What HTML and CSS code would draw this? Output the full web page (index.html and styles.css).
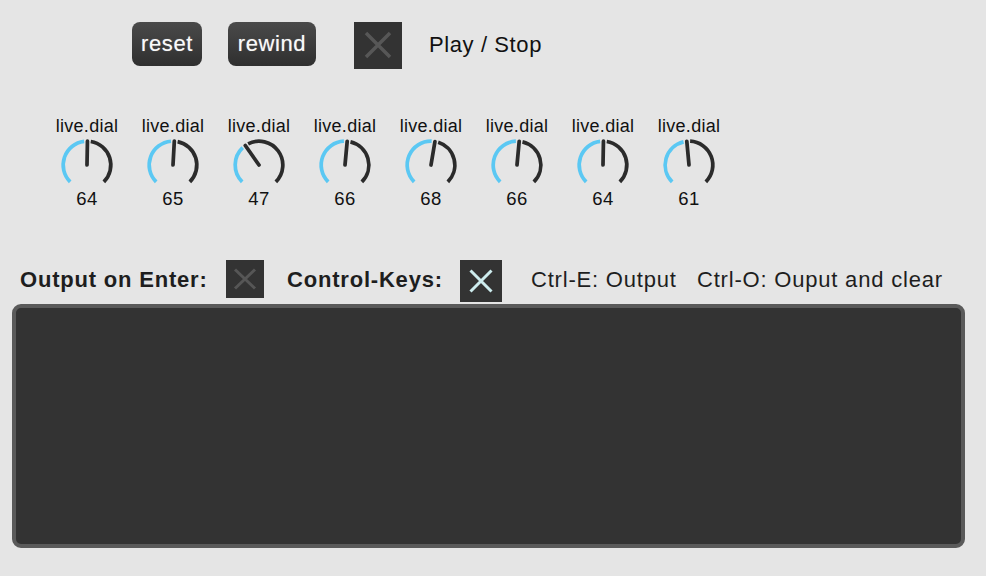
FILE: index.html
```html
<!DOCTYPE html>
<html>
<head>
<meta charset="utf-8">
<link rel="stylesheet" href="styles.css">
</head>
<body>
<div class="patch">
  <div class="top">
    <div class="btn btn-reset">reset</div>
    <div class="btn btn-rewind">rewind</div>
    <div class="toggle toggle-play">
      <svg width="48" height="47" viewBox="0 0 48 47"><path d="M12 11 L36 35 M36 11 L12 35" stroke="#575757" stroke-width="3.5" fill="none"/></svg>
    </div>
    <div class="play-label">Play / Stop</div>
  </div>

  <div class="dials">
    <div class="dial"><div class="dial-label">live.dial</div>
      <svg class="knob" viewBox="0 0 56 56"><path class="arc-on" d="M11.74 44.26 A23 23 0 0 1 25.22 5.17"/><path class="arc-off" d="M31.62 5.29 A23 23 0 0 1 44.26 44.26"/><path class="needle" d="M28 28 L28.43 5"/></svg>
      <div class="dial-value">64</div></div>
    <div class="dial"><div class="dial-label">live.dial</div>
      <svg class="knob" viewBox="0 0 56 56"><path class="arc-on" d="M11.74 44.26 A23 23 0 0 1 26.07 5.08"/><path class="arc-off" d="M32.46 5.44 A23 23 0 0 1 44.26 44.26"/><path class="needle" d="M28 28 L29.28 5.04"/></svg>
      <div class="dial-value">65</div></div>
    <div class="dial"><div class="dial-label">live.dial</div>
      <svg class="knob" viewBox="0 0 56 56"><path class="arc-on" d="M11.74 44.26 A23 23 0 0 1 12.28 11.21"/><path class="arc-off" d="M17.53 7.52 A23 23 0 0 1 44.26 44.26"/><path class="needle" d="M28 28 L14.78 9.18"/></svg>
      <div class="dial-value">47</div></div>
    <div class="dial"><div class="dial-label">live.dial</div>
      <svg class="knob" viewBox="0 0 56 56"><path class="arc-on" d="M11.74 44.26 A23 23 0 0 1 26.92 5.03"/><path class="arc-off" d="M33.29 5.62 A23 23 0 0 1 44.26 44.26"/><path class="needle" d="M28 28 L30.13 5.1"/></svg>
      <div class="dial-value">66</div></div>
    <div class="dial"><div class="dial-label">live.dial</div>
      <svg class="knob" viewBox="0 0 56 56"><path class="arc-on" d="M11.74 44.26 A23 23 0 0 1 28.63 5.01"/><path class="arc-off" d="M34.94 6.07 A23 23 0 0 1 44.26 44.26"/><path class="needle" d="M28 28 L31.82 5.32"/></svg>
      <div class="dial-value">68</div></div>
    <div class="dial"><div class="dial-label">live.dial</div>
      <svg class="knob" viewBox="0 0 56 56"><path class="arc-on" d="M11.74 44.26 A23 23 0 0 1 26.92 5.03"/><path class="arc-off" d="M33.29 5.62 A23 23 0 0 1 44.26 44.26"/><path class="needle" d="M28 28 L30.13 5.1"/></svg>
      <div class="dial-value">66</div></div>
    <div class="dial"><div class="dial-label">live.dial</div>
      <svg class="knob" viewBox="0 0 56 56"><path class="arc-on" d="M11.74 44.26 A23 23 0 0 1 25.22 5.17"/><path class="arc-off" d="M31.62 5.29 A23 23 0 0 1 44.26 44.26"/><path class="needle" d="M28 28 L28.43 5"/></svg>
      <div class="dial-value">64</div></div>
    <div class="dial"><div class="dial-label">live.dial</div>
      <svg class="knob" viewBox="0 0 56 56"><path class="arc-on" d="M11.74 44.26 A23 23 0 0 1 22.71 5.62"/><path class="arc-off" d="M29.08 5.03 A23 23 0 0 1 44.26 44.26"/><path class="needle" d="M28 28 L25.87 5.1"/></svg>
      <div class="dial-value">61</div></div>
  </div>

  <div class="controls">
    <div class="bold-label label-output">Output on Enter:</div>
    <div class="toggle toggle-output">
      <svg width="38" height="38" viewBox="0 0 38 38"><path d="M9 9.5 L29 28.5 M29 9.5 L9 28.5" stroke="#565656" stroke-width="3" fill="none"/></svg>
    </div>
    <div class="bold-label label-keys">Control-Keys:</div>
    <div class="toggle toggle-keys">
      <svg width="42" height="42" viewBox="0 0 42 42"><path d="M10.5 10.5 L31.5 31.5 M31.5 10.5 L10.5 31.5" stroke="#cdecee" stroke-width="3" fill="none"/></svg>
    </div>
    <div class="hint hint-e">Ctrl-E: Output</div>
    <div class="hint hint-o">Ctrl-O: Ouput and clear</div>
  </div>

  <div class="console"></div>
</div>
</body>
</html>
```

FILE: styles.css
```css
html, body {
  margin: 0;
  padding: 0;
  background: #e5e5e5;
}
body {
  width: 986px;
  height: 576px;
  overflow: hidden;
  font-family: "Liberation Sans", Arial, sans-serif;
  color: #1c1c1c;
}
.patch {
  display: flex;
  flex-direction: column;
}

/* top row */
.top {
  display: flex;
  align-items: flex-start;
  box-sizing: border-box;
  height: 69px;
  padding: 22px 0 0 132px;
}
.btn {
  height: 44px;
  line-height: 44px;
  box-sizing: border-box;
  border-radius: 8px;
  background: linear-gradient(#4a4a4a, #2f2f2f);
  color: #fafafa;
  font-size: 22px;
  letter-spacing: 0.6px;
  text-align: center;
  text-shadow: 0 0 1px rgba(255,255,255,0.5);
}
.btn-reset { width: 70px; }
.btn-rewind { width: 88px; margin-left: 26px; }
.toggle {
  background: #333333;
  display: flex;
}
.toggle-play {
  width: 48px;
  height: 47px;
  margin-left: 38px;
}
.play-label {
  margin-left: 27px;
  font-size: 22px;
  letter-spacing: 0.6px;
  line-height: 47px;
  margin-top: -1px;
  color: #111;
}

/* dials */
.dials {
  display: flex;
  box-sizing: border-box;
  height: 191px;
  padding: 47px 0 0 44px;
}
.dial {
  width: 86px;
  display: flex;
  flex-direction: column;
  align-items: center;
}
.dial-label {
  font-size: 18px;
  letter-spacing: 0.3px;
  line-height: 20px;
  height: 20px;
  color: #111;
}
.knob {
  display: block;
  width: 58px;
  height: 58px;
}
.arc-on, .arc-off {
  fill: none;
  stroke-width: 3.6;
}
.arc-on { stroke: #5bc8f3; }
.arc-off { stroke: #2b2b2b; }
.needle {
  stroke: #2b2b2b;
  stroke-width: 3.6;
  stroke-linecap: round;
  fill: none;
}
.dial-value {
  font-size: 18.5px;
  letter-spacing: 0.4px;
  line-height: 20px;
  margin-top: -5px;
  color: #111;
}

/* controls row */
.controls {
  display: flex;
  align-items: flex-start;
  box-sizing: border-box;
  height: 44px;
  padding-left: 20px;
}
.bold-label {
  font-weight: bold;
  font-size: 22px;
  letter-spacing: 0.8px;
  line-height: 40px;
  color: #1e1e1e;
}
.label-output { width: 206px; }
.toggle-output {
  width: 38px;
  height: 38px;
}
.label-keys {
  width: 173px;
  margin-left: 23px;
}
.toggle-keys {
  width: 42px;
  height: 42px;
}
.hint {
  font-size: 22px;
  letter-spacing: 0.8px;
  line-height: 40px;
  color: #1e1e1e;
}
.hint-e { margin-left: 29px; width: 166px; }

/* console */
.console {
  margin-left: 12px;
  width: 953px;
  height: 244px;
  box-sizing: border-box;
  border: 4px solid #5a5a5a;
  border-radius: 9px;
  background: #333333;
}
```
